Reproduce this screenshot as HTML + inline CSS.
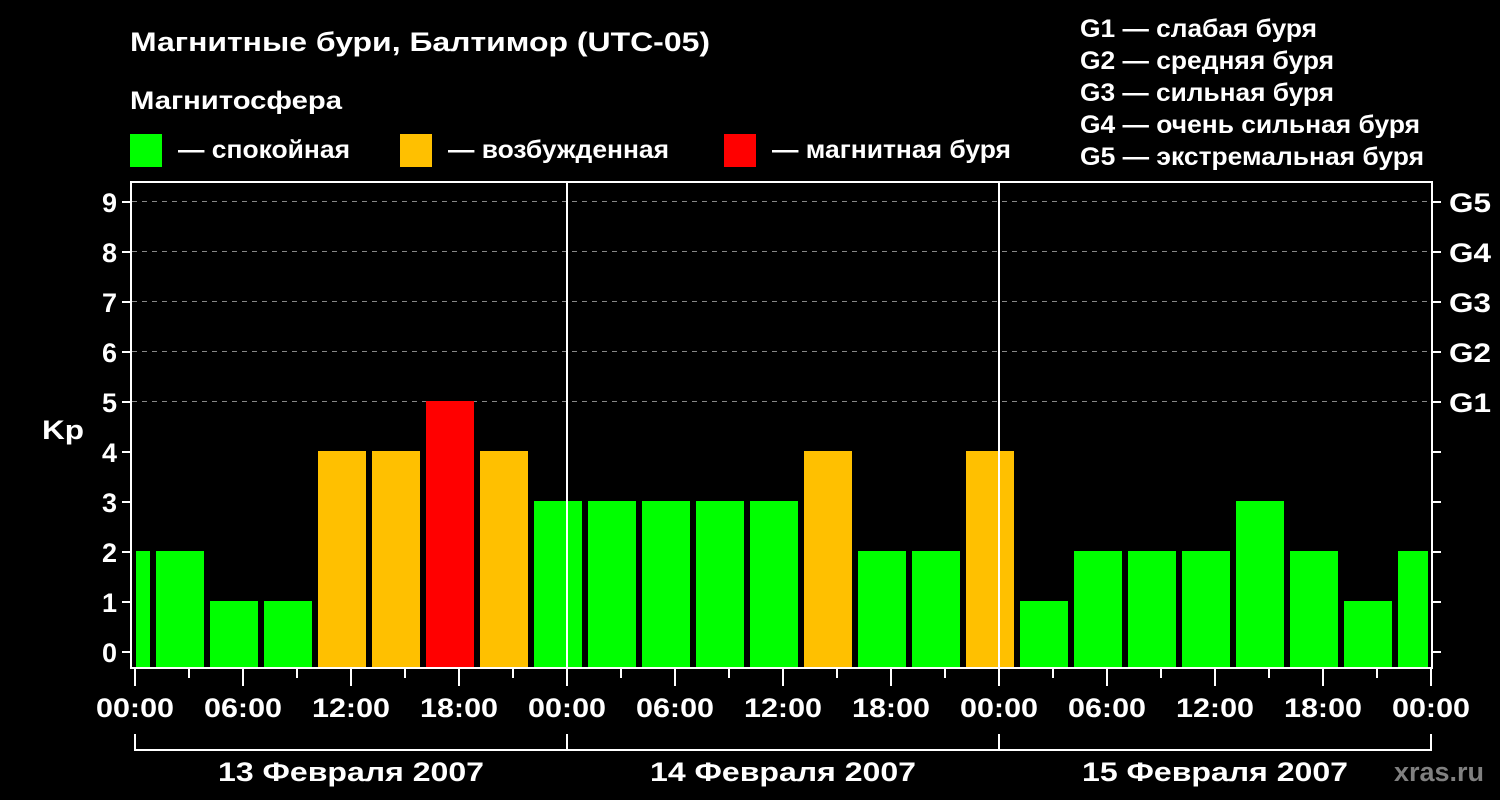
<!DOCTYPE html>
<html><head><meta charset="utf-8"><style>
body{margin:0;background:#000;width:1500px;height:800px;overflow:hidden}
svg{display:block}
text{font-family:"Liberation Sans",sans-serif;font-weight:bold;fill:#fff}
</style></head><body>
<svg width="1500" height="800" viewBox="0 0 1500 800">
<text x="130" y="51" font-size="27" textLength="580" lengthAdjust="spacingAndGlyphs">Магнитные бури, Балтимор (UTC-05)</text>
<text x="130" y="109" font-size="25" textLength="212" lengthAdjust="spacingAndGlyphs">Магнитосфера</text>
<rect x="130" y="134" width="32" height="33" fill="#00ff00"/>
<text x="178" y="158" font-size="25" textLength="172" lengthAdjust="spacingAndGlyphs">— спокойная</text>
<rect x="400" y="134" width="32" height="33" fill="#ffc000"/>
<text x="448" y="158" font-size="25" textLength="221" lengthAdjust="spacingAndGlyphs">— возбужденная</text>
<rect x="724" y="134" width="32" height="33" fill="#ff0000"/>
<text x="772" y="158" font-size="25" textLength="239" lengthAdjust="spacingAndGlyphs">— магнитная буря</text>
<g font-size="25">
<text x="1080" y="37" textLength="237" lengthAdjust="spacingAndGlyphs">G1 — слабая буря</text>
<text x="1080" y="69" textLength="254" lengthAdjust="spacingAndGlyphs">G2 — средняя буря</text>
<text x="1080" y="101" textLength="254" lengthAdjust="spacingAndGlyphs">G3 — сильная буря</text>
<text x="1080" y="133" textLength="340" lengthAdjust="spacingAndGlyphs">G4 — очень сильная буря</text>
<text x="1080" y="165" textLength="344" lengthAdjust="spacingAndGlyphs">G5 — экстремальная буря</text>
</g>
<g stroke="#888" stroke-dasharray="5,5" stroke-width="1">
<line x1="132" y1="201.5" x2="1431" y2="201.5"/>
<line x1="132" y1="251.5" x2="1431" y2="251.5"/>
<line x1="132" y1="301.5" x2="1431" y2="301.5"/>
<line x1="132" y1="351.5" x2="1431" y2="351.5"/>
<line x1="132" y1="401.5" x2="1431" y2="401.5"/>
</g>
<g id="bars"></g>
<g stroke="#fff" stroke-width="2" fill="none">
<rect x="131" y="182" width="1301" height="486"/>
<line x1="567" y1="182" x2="567" y2="668"/>
<line x1="999" y1="182" x2="999" y2="668"/>
<path d="M135 734V750H1431V734M567 734V750M999 734V750"/>
</g>
<g id="ticks" stroke="#fff" stroke-width="2"></g>
<g font-size="27" text-anchor="end" id="ylab"></g>
<g font-size="27">
<text x="1449" y="212" textLength="42" lengthAdjust="spacingAndGlyphs">G5</text><text x="1449" y="262" textLength="42" lengthAdjust="spacingAndGlyphs">G4</text><text x="1449" y="312" textLength="42" lengthAdjust="spacingAndGlyphs">G3</text><text x="1449" y="362" textLength="42" lengthAdjust="spacingAndGlyphs">G2</text><text x="1449" y="412" textLength="42" lengthAdjust="spacingAndGlyphs">G1</text>
</g>
<text x="42" y="439" font-size="27" textLength="42" lengthAdjust="spacingAndGlyphs">Kp</text>
<g font-size="27" id="xlab"></g>
<g font-size="27">
<text x="218" y="781" textLength="266" lengthAdjust="spacingAndGlyphs">13 Февраля 2007</text>
<text x="650" y="781" textLength="266" lengthAdjust="spacingAndGlyphs">14 Февраля 2007</text>
<text x="1082" y="781" textLength="266" lengthAdjust="spacingAndGlyphs">15 Февраля 2007</text>
</g>
<text x="1394" y="781" font-size="27" textLength="90" lengthAdjust="spacingAndGlyphs" style="fill:#808080">xras.ru</text>
</svg>
<script>
var ns="http://www.w3.org/2000/svg";
function el(p,t,a,txt){var e=document.createElementNS(ns,t);for(var k in a)e.setAttribute(k,a[k]);if(txt!=null)e.textContent=txt;p.appendChild(e);return e;}
var vals=[2,2,1,1,4,4,5,4,3,3,3,3,3,4,2,2,4,1,2,2,2,3,2,1,2];
var bars=document.getElementById('bars');
vals.forEach(function(v,i){var x0=156+54*(i-1),x1=x0+48;if(x0<136)x0=136;if(x1>1428)x1=1428;
var c=v>=5?'#ff0000':v==4?'#ffc000':'#00ff00';var top=652-50*v-1;
el(bars,'rect',{x:x0,y:top,width:x1-x0,height:668-top,fill:c});});
var t=document.getElementById('ticks'),yl=document.getElementById('ylab'),xl=document.getElementById('xlab');
for(var k=0;k<=9;k++){var y=652-50*k;el(t,'line',{x1:122,y1:y,x2:131,y2:y});el(t,'line',{x1:1432,y1:y,x2:1441,y2:y});el(yl,'text',{x:117,y:y+10},k);}
var hl=['00:00','06:00','12:00','18:00'];
for(var i=0;i<=24;i++){var x=135+54*i;var maj=i%2==0;el(t,'line',{x1:x,y1:669,x2:x,y2:maj?686:678});if(maj)el(xl,'text',{x:x-39,y:717,textLength:78,lengthAdjust:'spacingAndGlyphs'},hl[(i/2)%4]);}
</script>
</body></html>
